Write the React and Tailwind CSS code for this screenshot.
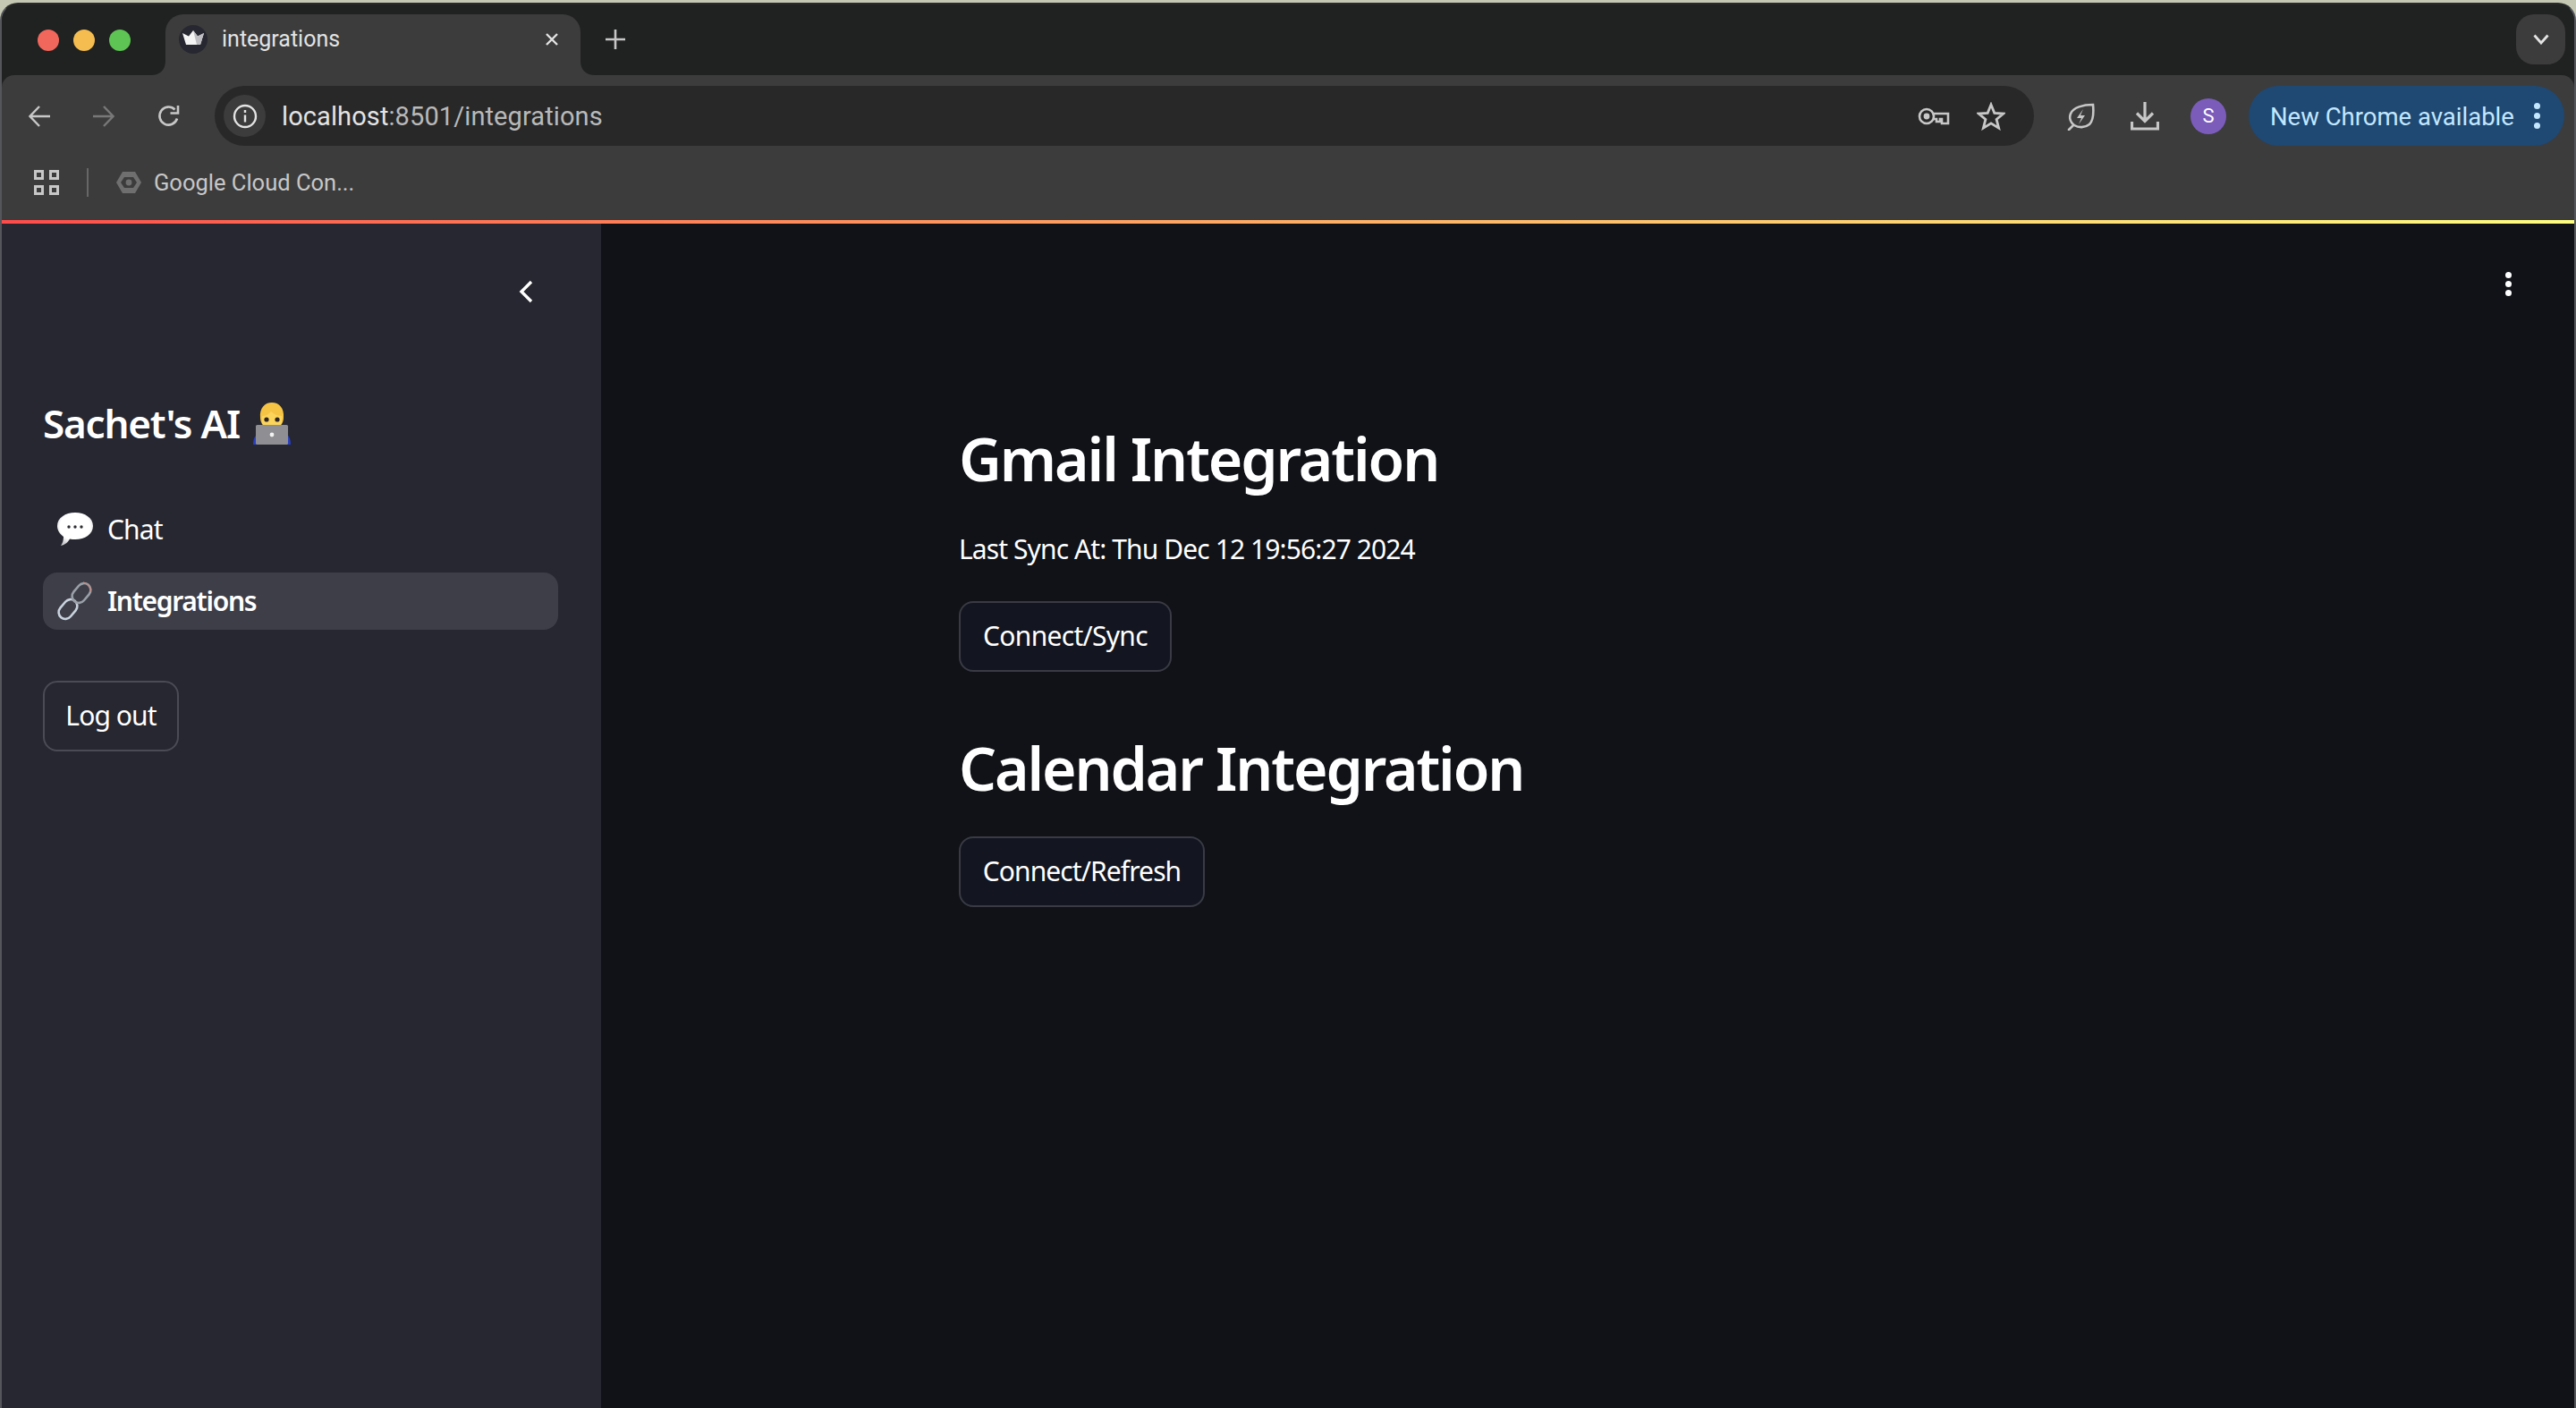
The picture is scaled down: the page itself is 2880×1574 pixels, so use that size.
const sans = "font-['Noto_Sans',sans-serif]"
const chrome = "font-['Roboto',sans-serif]"

function CrownIcon() {
  return (
    <svg width="32" height="32" viewBox="0 0 32 32">
      <circle cx="16" cy="16" r="16" fill="#262730" />
      <path d="M4 9l7 3.5L16 6l5 6.5L28 9l-4 13H8z" fill="#f4f4f4" />
      <path d="M16 6l5 6.5L28 9l-4 13h-4z" fill="#bdbdc2" />
    </svg>
  )
}

function TechEmoji() {
  return (
    <svg width="42" height="47" viewBox="0 0 42 47">
      <path d="M0 47c0-8 3-12 8-13h26c5 1 8 5 8 13z" fill="#2a3fc0" />
      <path d="M8 17C7 6 13 0 21 0s14 6 13 17c0 3-1 5-2 7H10c-1-2-2-4-2-7z" fill="#f6c445" />
      <path d="M10 15c4 0 8-2 10-5 3 3 7 5 12 5v8c-1 5-5 9-11 9s-10-4-11-9z" fill="#fbd45c" />
      <circle cx="15" cy="19" r="2.6" fill="#2d2320" />
      <circle cx="27" cy="19" r="2.6" fill="#2d2320" />
      <rect x="3" y="25" width="36" height="22" rx="1.5" fill="#8e8e93" />
      <circle cx="21" cy="36" r="2.4" fill="#f2f2f2" />
    </svg>
  )
}

function BubbleEmoji() {
  return (
    <svg width="40" height="38" viewBox="0 0 40 38">
      <defs>
        <radialGradient id="bubbleFill" cx="50%" cy="42%" r="60%">
          <stop offset="70%" stopColor="#ffffff" />
          <stop offset="100%" stopColor="#c9c9ce" />
        </radialGradient>
      </defs>
      <path d="M20 0c11 0 20 6 20 15S31 30 20 30c-2 0-4 0-6-.5C12 33 9 36 4 37c2-3 3-6 3-10C3 24 0 20 0 15 0 6 9 0 20 0z" fill="url(#bubbleFill)" />
      <circle cx="13" cy="16" r="1.7" fill="#2b2b30" />
      <circle cx="20" cy="16" r="1.7" fill="#2b2b30" />
      <circle cx="27" cy="16" r="1.7" fill="#2b2b30" />
    </svg>
  )
}

function LinkEmoji() {
  return (
    <svg width="40" height="44" viewBox="0 0 40 44" fill="none">
      <rect x="-12" y="-7.5" width="24" height="15" rx="7.5" transform="translate(12 31) rotate(-50)" stroke="#c9d3de" strokeWidth="2.6" />
      <rect x="-12" y="-7.5" width="24" height="15" rx="7.5" transform="translate(27 13) rotate(-50)" stroke="#9aa0a8" strokeWidth="2.6" />
      <path d="M29 1c5 1 9 5 8 11" stroke="#c9897c" strokeWidth="1.2" />
    </svg>
  )
}

function LeafIcon() {
  return (
    <svg width="32" height="32" viewBox="0 0 32 32" fill="none" stroke="#c7c7c7" strokeWidth="2.6">
      <path d="M30 3c1 10 0 18-4 22-5 4-12 4-17 1-4-3-6-8-4-13C8 6 19 3 30 3z" />
      <path d="M3 31l5-5" strokeLinecap="round" />
      <path d="M19 8l-7 10h5l-3 7 7-10h-5z" fill="#c7c7c7" stroke="none" />
    </svg>
  )
}

function KeyIcon() {
  return (
    <svg width="36" height="20" viewBox="0 0 36 20" fill="none" stroke="#c7c7c7" strokeWidth="2.6">
      <circle cx="10" cy="10" r="8" />
      <circle cx="10" cy="10" r="3.4" fill="#c7c7c7" stroke="none" />
      <path d="M18 7h16v11h-7v-5h-2v3h-4v-3h-3" />
    </svg>
  )
}

function CloudIcon() {
  return (
    <svg width="28" height="26" viewBox="0 0 28 26" fill="none">
      <path d="M7 1h14l7 12-7 12H7L0 13z" fill="#6f6f6f" />
      <path d="M9 7h10l4 6-4 6H9l-4-6z" fill="#3c3c3c" />
      <circle cx="14" cy="13" r="3.4" fill="#6f6f6f" />
    </svg>
  )
}

function TabFlare({ side }) {
  return (
    <svg className={side === 'left' ? 'absolute bottom-0 -left-[16px]' : 'absolute bottom-0 -right-[16px]'} width="16" height="16" viewBox="0 0 16 16">
      <path d={side === 'left' ? 'M16 0C16 10 10 16 0 16h16z' : 'M0 0c0 10 6 16 16 16H0z'} fill="#3c3c3c" />
    </svg>
  )
}

function Tabs() {
  return (
    <div className="flex h-[79px] shrink-0 items-start bg-[#202221] pt-[11px]">
      <div className="flex w-[183px] gap-[16px] pl-[40px] pt-[17px]">
        <span className="h-[24px] w-[24px] rounded-full bg-[#f1675c]" />
        <span className="h-[24px] w-[24px] rounded-full bg-[#f5bd4f]" />
        <span className="h-[24px] w-[24px] rounded-full bg-[#5ec453]" />
      </div>
      <div className="relative flex h-[68px] w-[464px] items-center rounded-t-[20px] bg-[#3c3c3c] pl-[15px] pb-[12px]">
        <TabFlare side="left" />
        <TabFlare side="right" />
        <CrownIcon />
        <span className={`ml-[16px] text-[25px] text-[#e3e3e3] ${chrome}`}>integrations</span>
        <svg className="ml-auto mr-[24px]" width="16" height="16" viewBox="0 0 16 16" stroke="#e3e3e3" strokeWidth="2.4">
          <path d="M2 2l12 12M14 2L2 14" />
        </svg>
      </div>
      <svg className="ml-[28px] mt-[17px]" width="22" height="22" viewBox="0 0 22 22" stroke="#c7c7c7" strokeWidth="2.6">
        <path d="M11 0v22M0 11h22" />
      </svg>
      <div className="ml-auto mr-[10px] flex h-[56px] w-[55px] items-center justify-center rounded-[20px] bg-[#3c3c3c]">
        <svg width="18" height="12" viewBox="0 0 18 12" fill="none" stroke="#e3e3e3" strokeWidth="2.8">
          <path d="M1.5 1.5L9 10l7.500-8.500" />
        </svg>
      </div>
    </div>
  )
}

function Toolbar() {
  return (
    <div className="h-[162px] shrink-0 rounded-t-[14px] bg-[#3c3c3c] pt-[12px]">
      <div className="flex h-[67px] items-center">
        <svg className="ml-[30px]" width="24" height="24" viewBox="0 0 24 24" fill="none" stroke="#c7c7c7" strokeWidth="2.4">
          <path d="M24 12H2M12 1L1.500 12 12 23" />
        </svg>
        <svg className="ml-[48px]" width="24" height="24" viewBox="0 0 24 24" fill="none" stroke="#787878" strokeWidth="2.4">
          <path d="M0 12h22M12 1l10.500 11L12 23" />
        </svg>
        <svg className="ml-[48px]" width="26" height="26" viewBox="0 0 26 26" fill="none" stroke="#c7c7c7" strokeWidth="2.6">
          <path d="M22 15.500A10 10 0 1 1 19.500 5.500" />
          <path d="M23 1v8.500h-8.500" />
        </svg>
        <div className="ml-[38px] flex h-[67px] w-[2034px] items-center rounded-full bg-[#282828] pl-[10px]">
          <div className="flex h-[47px] w-[47px] items-center justify-center rounded-full bg-[#3c3c3c]">
            <svg width="28" height="28" viewBox="0 0 28 28" fill="none" stroke="#e3e3e3" strokeWidth="2.4">
              <circle cx="14" cy="14" r="12" />
              <path d="M14 12.500v8M14 7v3" />
            </svg>
          </div>
          <span className={`ml-[18px] pt-[2px] text-[29px] tracking-[0.1px] text-[#e3e3e3] ${chrome}`}>
            localhost<span className="text-[#b9b9b9]">:8501/integrations</span>
          </span>
          <div className="ml-auto flex items-center pr-[32px]">
            <KeyIcon />
            <svg className="ml-[30px]" width="32" height="32" viewBox="0 0 32 32" fill="none" stroke="#c7c7c7" strokeWidth="2.8">
              <path d="M16 3l3.800 9.300 10 .7-7.700 6.400 2.500 9.700L16 23.800l-8.600 5.300 2.500-9.700L2.200 13l10-.7z" />
            </svg>
          </div>
        </div>
        <div className="ml-[36px]"><LeafIcon /></div>
        <svg className="ml-[40px]" width="32" height="32" viewBox="0 0 32 32" fill="none" stroke="#c7c7c7" strokeWidth="3.2">
          <path d="M16 0v21M7 12.500l9 9 9-9M1.500 22v8h29v-8" />
        </svg>
        <div className={`ml-[35px] flex h-[40px] w-[40px] items-center justify-center rounded-full bg-[#7b5cbb] text-[22px] text-white ${chrome}`}>S</div>
        <div className="ml-[25px] flex h-[67px] w-[353px] items-center rounded-full bg-[#1f4872] pl-[24px]">
          <span className={`pt-[2px] text-[27.500px] text-[#c2e7ff] ${chrome}`}>New Chrome available</span>
          <div className="ml-[22px] flex flex-col gap-[4px]">
            <span className="h-[7px] w-[7px] rounded-full bg-[#c2e7ff]" />
            <span className="h-[7px] w-[7px] rounded-full bg-[#c2e7ff]" />
            <span className="h-[7px] w-[7px] rounded-full bg-[#c2e7ff]" />
          </div>
        </div>
      </div>
      <div className="mt-[16px] flex h-[50px] items-center pl-[36px]">
        <div className="grid grid-cols-2 gap-[6px]">
          <span className="h-[11px] w-[11px] border-[3px] border-[#c7c7c7]" />
          <span className="h-[11px] w-[11px] border-[3px] border-[#c7c7c7]" />
          <span className="h-[11px] w-[11px] border-[3px] border-[#c7c7c7]" />
          <span className="h-[11px] w-[11px] border-[3px] border-[#c7c7c7]" />
        </div>
        <span className="ml-[31px] h-[32px] w-[2px] bg-[#676767]" />
        <div className="ml-[31px]"><CloudIcon /></div>
        <span className={`ml-[14px] text-[25.500px] text-[#c7c7c7] ${chrome}`}>Google Cloud Con...</span>
      </div>
    </div>
  )
}

function Sidebar() {
  return (
    <aside className={`flex w-[670px] shrink-0 flex-col bg-[#262730] pl-[46px] pr-[48px] ${sans}`}>
      <div className="flex h-[89px] items-end justify-end pr-[28px]">
        <svg width="16" height="26" viewBox="0 0 16 26" fill="none" stroke="#ffffff" strokeWidth="3.4">
          <path d="M14 2L3 13l11 11" />
        </svg>
      </div>
      <div className="mt-[102px] flex h-[64px] items-center gap-[15px] text-[44px] font-semibold tracking-[-1.200px] text-white">
        Sachet's AI
        <TechEmoji />
      </div>
      <nav className="mt-[55px] flex flex-col gap-[16px]">
        <div className="flex h-[64px] items-center rounded-[16px] pl-[16px] text-[30px] tracking-[-0.9px] text-white">
          <BubbleEmoji />
          <span className="ml-[16px] pb-[2px]">Chat</span>
        </div>
        <div className="flex h-[64px] items-center rounded-[16px] bg-[#3d3e48] pl-[16px] text-[30px] font-semibold tracking-[-1.300px] text-white">
          <LinkEmoji />
          <span className="ml-[16px] pb-[2px]">Integrations</span>
        </div>
      </nav>
      <button className="mt-[57px] flex h-[79px] w-[152px] items-center justify-center rounded-[16px] border-2 border-[#4a4b55] pb-[2px] text-[30px] tracking-[-0.9px] text-white">
        Log out
      </button>
    </aside>
  )
}

function Main() {
  return (
    <main className={`relative flex flex-1 flex-col bg-[#101218] pl-[400px] ${sans}`}>
      <div className="absolute right-[70px] top-[54px] flex flex-col gap-[3px]">
        <span className="h-[7px] w-[7px] rounded-full bg-white" />
        <span className="h-[7px] w-[7px] rounded-full bg-white" />
        <span className="h-[7px] w-[7px] rounded-full bg-white" />
      </div>
      <h2 className="mt-[217px] h-[90px] text-[66px] leading-[90px] font-semibold tracking-[-2.100px] text-white">Gmail Integration</h2>
      <p className="mt-[33px] h-[48px] text-[30px] leading-[48px] tracking-[-0.9px] text-white">Last Sync At: Thu Dec 12 19:56:27 2024</p>
      <button className="mt-[34px] flex h-[79px] w-[238px] items-center justify-center rounded-[16px] border-2 border-[#393a44] bg-[#131620] pb-[2px] text-[30px] tracking-[-0.7px] text-white">
        Connect/Sync
      </button>
      <h2 className="mt-[62px] h-[90px] text-[66px] leading-[90px] font-semibold tracking-[-2.100px] text-white">Calendar Integration</h2>
      <button className="mt-[32px] flex h-[79px] w-[275px] items-center justify-center rounded-[16px] border-2 border-[#393a44] bg-[#131620] pb-[2px] text-[30px] tracking-[-0.9px] text-white">
        Connect/Refresh
      </button>
    </main>
  )
}

export default function App() {
  return (
    <div className="h-[1574px] w-[2880px] overflow-hidden bg-[#c5c9b4] pt-[3px]">
      <div className="flex h-[1571px] flex-col overflow-hidden rounded-t-[20px] border-x-2 border-t-2 border-x-[#55565c] border-t-[#2a2b2a] bg-[#202221]">
        <Tabs />
        <Toolbar />
        <div className="h-[4px] shrink-0 bg-gradient-to-r from-[#ff4b4b] to-[#fffd80]" />
        <div className="flex flex-1">
          <Sidebar />
          <Main />
        </div>
      </div>
    </div>
  )
}
